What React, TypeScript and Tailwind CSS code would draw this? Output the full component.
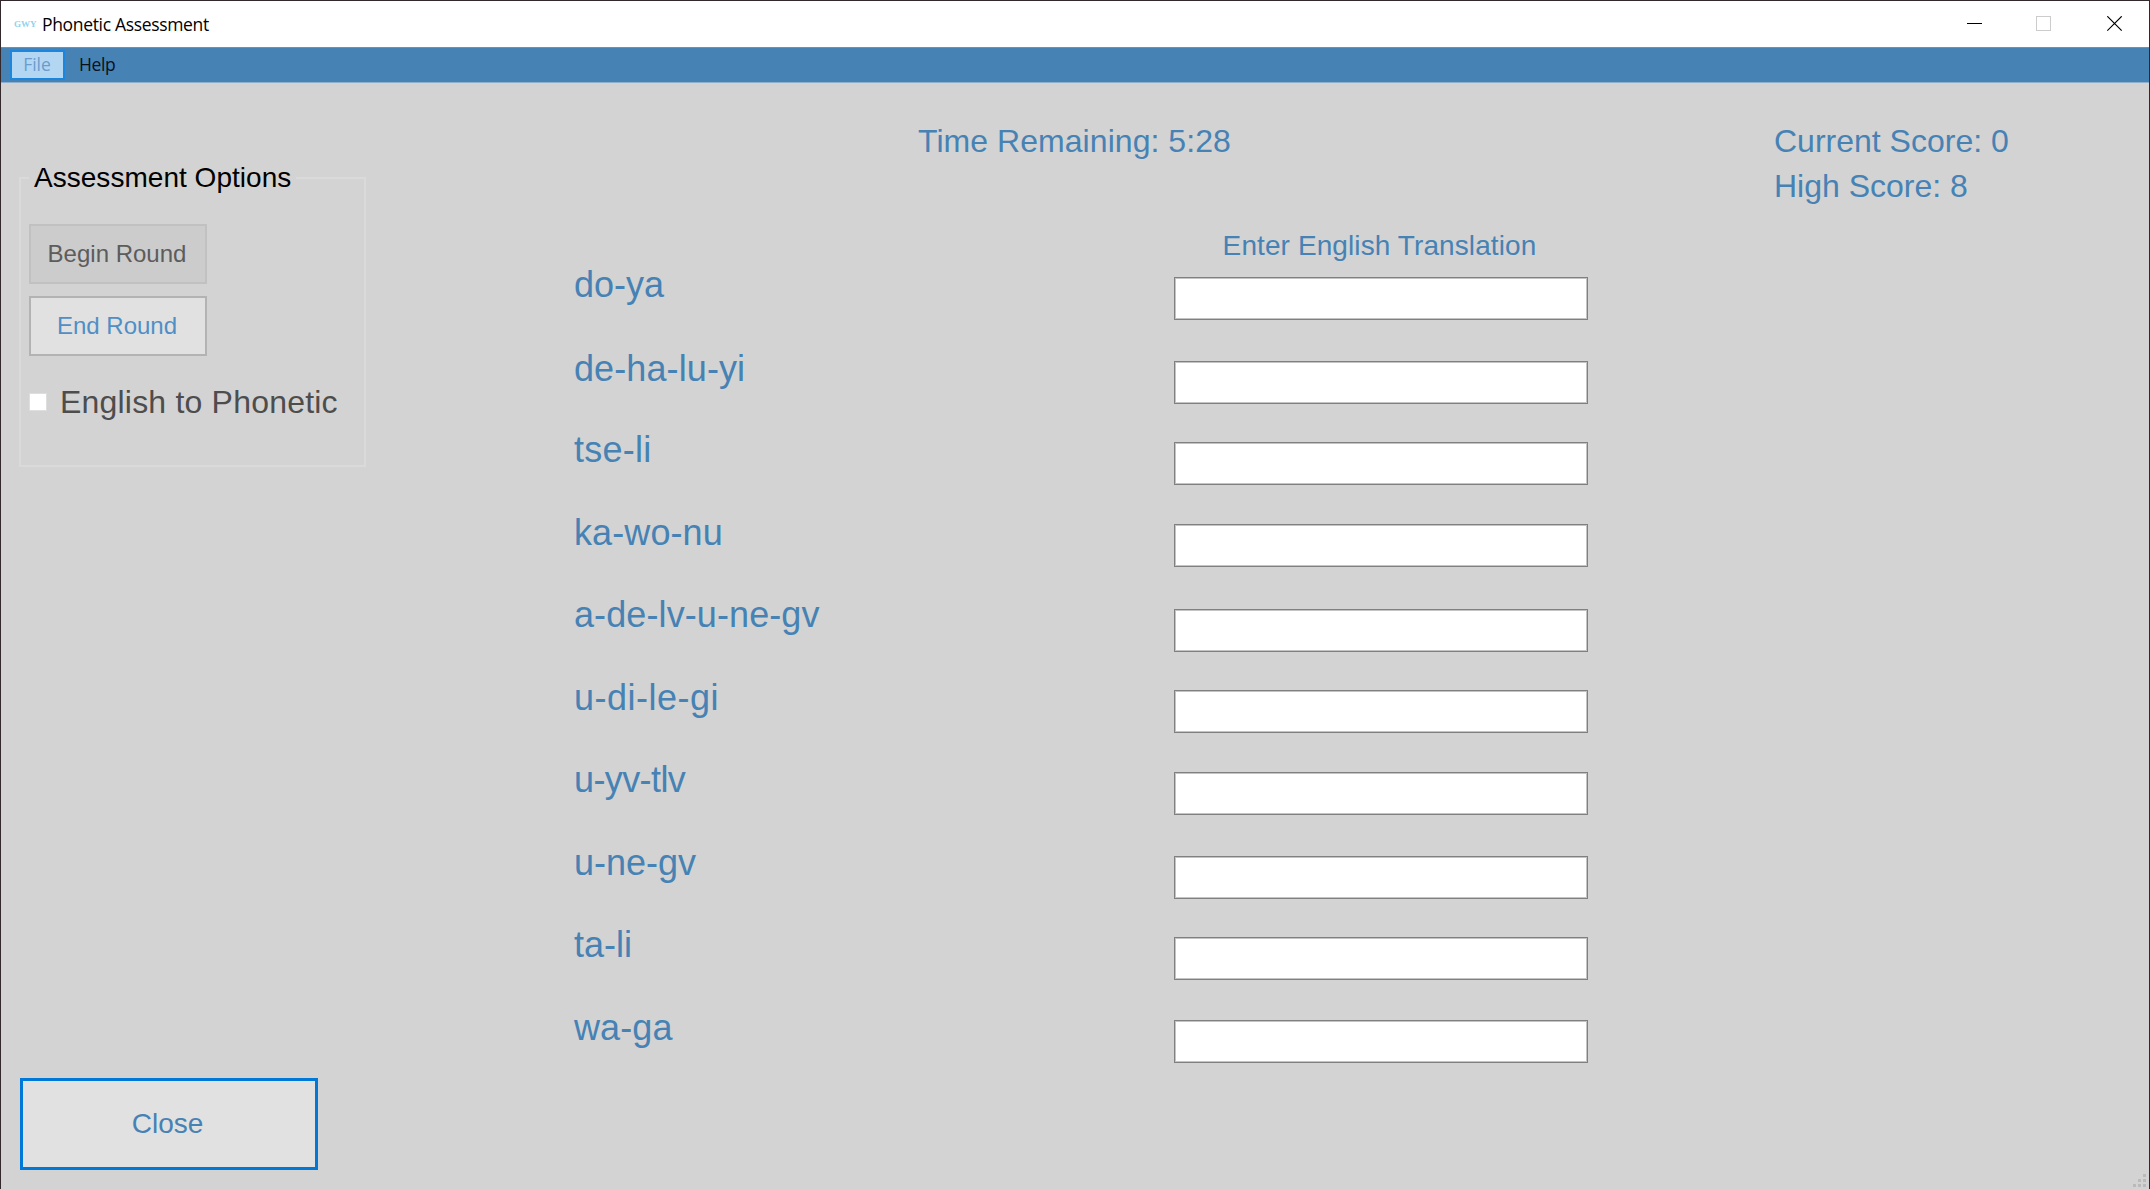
import React from "react";

const rows = [
  { word: "do-ya", tracking: "tracking-normal", wordPitch: "h-[84px]", inputPitch: "h-[84px]" },
  { word: "de-ha-lu-yi", tracking: "tracking-[0.1px]", wordPitch: "h-[81px]", inputPitch: "h-[81px]" },
  { word: "tse-li", tracking: "tracking-[0.25px]", wordPitch: "h-[83px]", inputPitch: "h-[82px]" },
  { word: "ka-wo-nu", tracking: "tracking-[0.1px]", wordPitch: "h-[82px]", inputPitch: "h-[85px]" },
  { word: "a-de-lv-u-ne-gv", tracking: "tracking-[0.1px]", wordPitch: "h-[83px]", inputPitch: "h-[81px]" },
  { word: "u-di-le-gi", tracking: "tracking-[0.5px]", wordPitch: "h-[82px]", inputPitch: "h-[82px]" },
  { word: "u-yv-tlv", tracking: "tracking-[-0.6px]", wordPitch: "h-[83px]", inputPitch: "h-[84px]" },
  { word: "u-ne-gv", tracking: "tracking-normal", wordPitch: "h-[82px]", inputPitch: "h-[81px]" },
  { word: "ta-li", tracking: "tracking-normal", wordPitch: "h-[83px]", inputPitch: "h-[83px]" },
  { word: "wa-ga", tracking: "tracking-[0.1px]", wordPitch: "h-[82px]", inputPitch: "h-[82px]" },
];

function TitleBar() {
  return (
    <header className="flex h-[46px] shrink-0 items-center bg-white pl-[13px] font-['Open_Sans',sans-serif]">
      <span className="w-[22px] font-['Liberation_Serif',serif] text-[9px] leading-none font-bold text-[#8fd3ee]">GWY</span>
      <span className="ml-[6px] text-[17.5px] leading-[24px] tracking-[-0.33px] whitespace-nowrap text-black">
        Phonetic Assessment
      </span>
      <div className="ml-auto flex items-center pr-[26px]">
        <svg width="16" height="16" viewBox="0 0 16 16" shapeRendering="crispEdges">
          <path d="M0 7.5H15" stroke="#000" />
        </svg>
        <svg className="ml-[53px]" width="16" height="16" viewBox="0 0 16 16" shapeRendering="crispEdges">
          <rect x="0.5" y="0.5" width="14" height="14" fill="none" stroke="#ccc" />
        </svg>
        <svg className="ml-[55px]" width="16" height="16" viewBox="0 0 16 16">
          <path d="M0.3 0.3L14.7 14.7M14.7 0.3L0.3 14.7" stroke="#000" strokeWidth="1.2" />
        </svg>
      </div>
    </header>
  );
}

function MenuBar() {
  return (
    <nav className="flex h-9 shrink-0 items-center border-y border-t-[#5f95c0] border-b-[#8fb0cd] bg-[#4682b4] pl-[9px] font-['Open_Sans',sans-serif] text-[17.5px] leading-none">
      <button className="flex h-[30px] w-[55px] items-center justify-center border-2 border-[#1c86de] bg-[#b3d7f3] pr-px text-[#6b9ccc]">
        File
      </button>
      <button className="ml-[14px] tracking-[-0.4px] text-[#0b0f1c]">Help</button>
    </nav>
  );
}

function OptionsPanel() {
  return (
    <section className="mt-[79px] ml-[18px] h-[305px] w-[347px]">
      <fieldset className="h-[305px] border-2 border-[#dadada] pl-[8px]">
        <legend className="px-[5px] text-[28px] leading-[32px] tracking-[0.03px] text-black">Assessment Options</legend>
        <button className="mt-[30px] block h-[60px] w-[178px] border-2 border-[#c1c1c1] bg-[#ccc] pr-[2px] text-2xl text-[#5c5c5c]">
          Begin Round
        </button>
        <button className="mt-3 block h-[60px] w-[178px] border-2 border-[#b3b3b3] bg-[#e1e1e1] pr-[2px] text-2xl text-[#4f8fc6]">
          End Round
        </button>
        <label className="mt-[28px] flex items-center text-[32px] leading-[36px] tracking-[0.2px] whitespace-nowrap text-[#4d4d4d]">
          <span className="mr-[13px] size-[18px] border border-[#dedede] bg-white" />
          English to Phonetic
        </label>
      </fieldset>
    </section>
  );
}

function ResizeGrip() {
  return (
    <svg className="absolute right-[3px] bottom-[2px]" width="13" height="13" viewBox="0 0 13 13" fill="#bababa">
      <rect x="10" y="0" width="3" height="3" />
      <rect x="5" y="5" width="3" height="3" />
      <rect x="10" y="5" width="3" height="3" />
      <rect x="0" y="10" width="3" height="3" />
      <rect x="5" y="10" width="3" height="3" />
      <rect x="10" y="10" width="3" height="3" />
    </svg>
  );
}

export default function App() {
  return (
    <div className="relative flex h-[1189px] w-[2150px] flex-col overflow-hidden border-x border-t border-[#33292d] bg-[#d3d3d3] font-['Liberation_Sans',Arial,sans-serif] text-[#4682b4]">
      <TitleBar />
      <MenuBar />
      <main className="flex min-h-0 flex-1">
        <aside className="flex w-[573px] shrink-0 flex-col">
          <OptionsPanel />
          <button className="mt-auto mb-[19px] ml-[19px] h-[92px] w-[298px] border-[3px] border-[#0078d7] bg-[#e1e1e1] pr-[3px] text-[28px]">
            Close
          </button>
        </aside>

        <section className="w-[1200px] shrink-0">
          <div className="mt-[40px] ml-[344px] text-[32px] leading-[36px] tracking-[0.05px]">Time Remaining: 5:28</div>
          <div className="flex">
            <div className="mt-[106px] w-[600px] shrink-0">
              {rows.map((row) => (
                <div key={row.word} className={row.wordPitch}>
                  <div className={`text-4xl leading-[40px] whitespace-nowrap ${row.tracking}`}>{row.word}</div>
                </div>
              ))}
            </div>
            <div className="mt-[71px] w-[414px]">
              <div className="h-[47px] pr-[3px] text-center text-[28px] leading-[32px] tracking-[0.1px] whitespace-nowrap">
                Enter English Translation
              </div>
              {rows.map((row) => (
                <div key={row.word} className={row.inputPitch}>
                  <input
                    aria-label={row.word}
                    className="block h-[43px] w-full border border-[#808080] bg-white px-2 text-2xl shadow-[inset_0_0_0_1px_#c4c4c4] outline-none"
                  />
                </div>
              ))}
            </div>
          </div>
        </section>

        <section className="mt-[36px] text-[32px] leading-[45px] whitespace-nowrap">
          <div>Current Score: 0</div>
          <div>High Score: 8</div>
        </section>
      </main>
      <ResizeGrip />
    </div>
  );
}
